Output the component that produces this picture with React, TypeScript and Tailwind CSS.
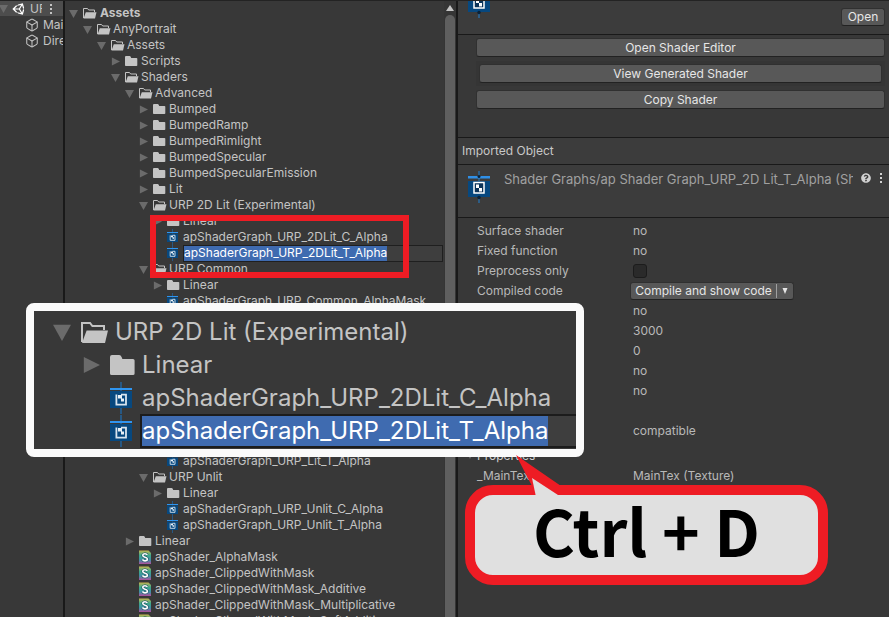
import { Box } from "lucide-react";
import { FaUnity, FaQuestionCircle } from "react-icons/fa";

type Kind = "open" | "folder" | "graph" | "shader";
type Item = { name: string; level: number; kind: Kind; bold?: boolean; editing?: boolean };

const topItems: Item[] = [
  { name: "Assets", level: 0, kind: "open", bold: true },
  { name: "AnyPortrait", level: 1, kind: "open" },
  { name: "Assets", level: 2, kind: "open" },
  { name: "Scripts", level: 3, kind: "folder" },
  { name: "Shaders", level: 3, kind: "open" },
  { name: "Advanced", level: 4, kind: "open" },
  { name: "Bumped", level: 5, kind: "folder" },
  { name: "BumpedRamp", level: 5, kind: "folder" },
  { name: "BumpedRimlight", level: 5, kind: "folder" },
  { name: "BumpedSpecular", level: 5, kind: "folder" },
  { name: "BumpedSpecularEmission", level: 5, kind: "folder" },
  { name: "Lit", level: 5, kind: "folder" },
  { name: "URP 2D Lit (Experimental)", level: 5, kind: "open" },
  { name: "Linear", level: 6, kind: "folder" },
  { name: "apShaderGraph_URP_2DLit_C_Alpha", level: 6, kind: "graph" },
  { name: "apShaderGraph_URP_2DLit_T_Alpha", level: 6, kind: "graph", editing: true },
  { name: "URP Common", level: 5, kind: "open" },
  { name: "Linear", level: 6, kind: "folder" },
  { name: "apShaderGraph_URP_Common_AlphaMask", level: 6, kind: "graph" },
];

const bottomItems: Item[] = [
  { name: "apShaderGraph_URP_Lit_T_Alpha", level: 6, kind: "graph" },
  { name: "URP Unlit", level: 5, kind: "open" },
  { name: "Linear", level: 6, kind: "folder" },
  { name: "apShaderGraph_URP_Unlit_C_Alpha", level: 6, kind: "graph" },
  { name: "apShaderGraph_URP_Unlit_T_Alpha", level: 6, kind: "graph" },
  { name: "Linear", level: 4, kind: "folder" },
  { name: "apShader_AlphaMask", level: 4, kind: "shader" },
  { name: "apShader_ClippedWithMask", level: 4, kind: "shader" },
  { name: "apShader_ClippedWithMask_Additive", level: 4, kind: "shader" },
  { name: "apShader_ClippedWithMask_Multiplicative", level: 4, kind: "shader" },
  { name: "apShader_ClippedWithMask_SoftAdditive", level: 4, kind: "shader" },
];

const indents = ["pl-1", "pl-[18px]", "pl-8", "pl-[46px]", "pl-[60px]", "pl-[74px]", "pl-[88px]"];

function Arrow({ kind, className }: { kind: Kind; className: string }) {
  return (
    <svg viewBox="0 0 10 10" className={`shrink-0 ${className}`} fill="#6b6b6b">
      {kind === "open" && <path d="M0 1h10L5 10z" />}
      {kind === "folder" && <path d="M1 0.5v9L10 5z" />}
    </svg>
  );
}

function KindIcon({ kind, className }: { kind: Kind; className: string }) {
  return (
    <svg viewBox="0 0 14 16" className={`shrink-0 ${className}`}>
      {kind === "open" && (
        <>
          <path d="M0.5 13V3.5h4l1.2 1.5h5.8v2" fill="none" stroke="#c4c4c4" />
          <path d="M0.500 13.5l2.300-6.300H13.500l-1.500 6.300z" fill="#c4c4c4" />
        </>
      )}
      {kind === "folder" && (
        <path d="M0 4q0-1 1-1h3.6q.8 0 1.2 1l.4 1H11.500q.8 0 .8.8v6.400q0 .8-.8.8H.8q-.8 0-.8-.8z" fill="#c4c4c4" />
      )}
      {kind === "graph" && (
        <>
          <path d="M5.500 0v16" stroke="#1d6fb8" strokeWidth="0.6" />
          <rect x="0" y="4.500" width="11" height="8.500" fill="#07487f" />
          <rect x="0" y="3" width="11" height="1" fill="#2f95f0" />
          <path d="M3.200 6.300v5h4.800v-5h-2.500" fill="none" stroke="#d8e4ee" strokeWidth="0.9" />
          <path d="M4 6.500h2v1.800H4zM5.500 8.300h1.500v1.500H5.500z" fill="#e8f0f6" />
        </>
      )}
      {kind === "shader" && (
        <>
          <defs>
            <linearGradient id="shaderPage" x1="0" y1="0" x2="0" y2="1">
              <stop offset="0" stopColor="#c5b44e" />
              <stop offset="0.350" stopColor="#3fa98a" />
              <stop offset="0.700" stopColor="#3e8fa6" />
              <stop offset="1" stopColor="#b04f9c" />
            </linearGradient>
          </defs>
          <path d="M0 1.500h9.500l2.500 2.500v11H0z" fill="url(#shaderPage)" />
          <path d="M8.300 5.900C7.800 5 7 4.700 6 4.700c-1.300 0-2.200.7-2.200 1.700 0 2.400 4.600 1.200 4.600 3.700 0 1.100-1 1.800-2.400 1.800-1.200 0-2.100-.5-2.500-1.500" fill="none" stroke="#12485a" strokeWidth="2.600" />
          <path d="M8.300 5.900C7.800 5 7 4.700 6 4.700c-1.300 0-2.200.7-2.200 1.700 0 2.400 4.600 1.200 4.600 3.700 0 1.100-1 1.800-2.400 1.800-1.200 0-2.100-.5-2.500-1.500" fill="none" stroke="#fff" strokeWidth="1.600" />
        </>
      )}
    </svg>
  );
}

function TreeRow({ item }: { item: Item }) {
  return (
    <li className={`flex h-4 items-center ${indents[item.level]}`}>
      <Arrow kind={item.kind} className="mr-[5px] size-[9px]" />
      <KindIcon kind={item.kind} className="mr-0.5 h-4 w-3.5" />
      {item.editing ? (
        <div className="mr-px flex h-[17px] grow items-center border border-[#1f1f1f] bg-[#3e3e3e]">
          <input
            aria-label="Asset name"
            defaultValue={item.name}
            className="field-sizing-content h-[15px] bg-[#3f6bb0] text-white outline-none"
          />
        </div>
      ) : (
        <span className={`whitespace-nowrap ${item.bold ? "pl-px font-bold" : ""}`}>{item.name}</span>
      )}
    </li>
  );
}

function GraphLogo() {
  return (
    <svg viewBox="0 0 22 32" className="h-8 w-[22px] shrink-0">
      <path d="M11 0v32" stroke="#1f7fd0" />
      <rect y="5" width="22" height="2.500" fill="#2f8fe6" />
      <rect y="10" width="22" height="16" fill="#07487f" />
      <circle cx="11" cy="5.500" r="1.500" fill="#0a2238" />
      <circle cx="11" cy="26.500" r="1.700" fill="#0a2238" />
      <rect x="6" y="11.500" width="10" height="10.500" fill="#0b3358" stroke="#fff" strokeWidth="1.500" />
      <path d="M8 13.500h3V17H8zM11 17h3v3.500h-3z" fill="#fff" />
    </svg>
  );
}

const buttonLook =
  "rounded-[3px] border border-[#303030] border-b-[#222] bg-[#585858] text-center text-[#e6e6e6] leading-4";

function Value({ label, value }: { label: string; value: string }) {
  return (
    <div className="flex h-5 items-center">
      <dt className="w-39 shrink-0">{label}</dt>
      <dd>{value}</dd>
    </div>
  );
}

function Inspector() {
  return (
    <section className="flex min-w-0 grow flex-col bg-[#383838] text-[#b8b8b8]">
      <header className="flex h-[34px] shrink-0 items-end justify-between overflow-hidden border-b border-[#191919] bg-[#3c3c3c] pr-1 pl-[10px]">
        <div className="mb-4">
          <GraphLogo />
        </div>
        <button className={`mb-2 h-[18px] w-11 ${buttonLook}`}>Open</button>
      </header>
      <div className="flex h-[103px] shrink-0 flex-col border-b border-[#191919] pt-[3px] pr-1 pl-[18px]">
        <button className={`h-[19px] ${buttonLook}`}>Open Shader Editor</button>
        <div className="my-1 flex bg-[#353535] px-[3px] py-[3px]">
          <button className={`h-[19px] grow ${buttonLook}`}>View Generated Shader</button>
        </div>
        <button className={`h-[19px] ${buttonLook}`}>Copy Shader</button>
      </div>
      <h2 className="flex h-[27px] shrink-0 items-center border-b border-[#191919] bg-[#3c3c3c] pl-1 text-[#c8c8c8]">
        Imported Object
      </h2>
      <header className="flex h-[53px] shrink-0 items-start border-b border-[#191919] bg-[#3c3c3c] pt-1.5 pr-1.5 pl-[10px]">
        <GraphLogo />
        <h3 className="ml-[14px] min-w-0 grow overflow-hidden text-[13px] leading-4 whitespace-nowrap text-[#a0a0a0]">
          Shader Graphs/ap Shader Graph_URP_2D Lit_T_Alpha (Shader)
        </h3>
        <button aria-label="Help" className="ml-2 pt-0.5">
          <FaQuestionCircle className="size-2.5 text-[#d0d0d0]" />
        </button>
        <button aria-label="More" className="ml-2 pt-0.5">
          <svg viewBox="0 0 4 10" className="h-2.5 w-1" fill="#d0d0d0">
            <path d="M1 0h2v2H1zM1 4h2v2H1zM1 8h2v2H1z" />
          </svg>
        </button>
      </header>
      <dl className="flex flex-col pt-[3px] pl-[19px]">
        <Value label="Surface shader" value="no" />
        <Value label="Fixed function" value="no" />
        <div className="flex h-5 items-center">
          <dt className="w-39 shrink-0">
            <label htmlFor="preprocess">Preprocess only</label>
          </dt>
          <dd className="flex">
            <input
              id="preprocess"
              type="checkbox"
              className="size-3.5 appearance-none rounded-[3px] border border-[#1c1c1c] bg-[#2a2a2a]"
            />
          </dd>
        </div>
        <div className="flex h-5 items-center">
          <dt className="w-[153px] shrink-0">Compiled code</dt>
          <dd className={`flex h-[18px] w-[164px] items-center ${buttonLook}`}>
            <button className="grow whitespace-nowrap">Compile and show code</button>
            <button aria-label="Compile options" className="flex h-3.5 w-[17px] items-center justify-center border-l border-[#a0a0a0]">
              <svg viewBox="0 0 6 6" className="size-1.5" fill="#e6e6e6">
                <path d="M0.500 0h5L3 6z" />
              </svg>
            </button>
          </dd>
        </div>
        <Value label="" value="no" />
        <Value label="" value="3000" />
        <Value label="" value="0" />
        <Value label="" value="no" />
        <Value label="" value="no" />
        <Value label="" value="" />
        <Value label="" value="compatible" />
      </dl>
      <h4 className="flex h-[25px] items-center pt-[5px] pl-[9px] text-[#d0d0d0]">
        <svg viewBox="0 0 6 6" className="mr-1 size-1.5" fill="#6b6b6b">
          <path d="M0 1h6L3 6z" />
        </svg>
        Properties
      </h4>
      <dl className="pl-[19px]">
        <Value label="_MainTex" value="MainTex (Texture)" />
      </dl>
    </section>
  );
}

function Magnifier() {
  return (
    <div className="absolute top-[302px] left-[26px] w-[558px] rounded-lg border-8 border-[#fafafa] bg-[#383838] text-2xl leading-[33px] whitespace-nowrap text-[#c4c4c4]">
      <ul className="h-[138px] overflow-hidden pt-1">
        <li className="flex h-[33px] items-center pl-[19px]">
          <Arrow kind="open" className="mr-2.5 size-[18px]" />
          <KindIcon kind="open" className="mr-1.5 h-8 w-7" />
          URP 2D Lit (Experimental)
        </li>
        <li className="flex h-[33px] items-center pl-12">
          <Arrow kind="folder" className="mr-2.5 size-[18px]" />
          <KindIcon kind="folder" className="mr-1 h-8 w-7" />
          Linear
        </li>
        <li className="flex h-[33px] items-center pl-[76px]">
          <KindIcon kind="graph" className="mr-1 h-8 w-7" />
          apShaderGraph_URP_2DLit_C_Alpha
        </li>
        <li className="flex h-[33px] items-center pl-[76px]">
          <KindIcon kind="graph" className="mr-0.5 h-8 w-7" />
          <div className="flex grow border-y-2 border-l-2 border-[#1c1c1c] bg-[#3e3e3e]">
            <input
              aria-label="Asset name, enlarged"
              defaultValue="apShaderGraph_URP_2DLit_T_Alpha"
              className="field-sizing-content h-[30px] bg-[#3f6bb0] text-white outline-none"
            />
          </div>
        </li>
      </ul>
    </div>
  );
}

function Callout() {
  return (
    <div className="absolute top-[484px] left-[465px]">
      <p className="flex h-[100px] w-[363px] items-center justify-center rounded-[28px] border-10 border-[#ee1c24] bg-[#e0e0e0] pb-3 font-['Noto_Sans_CJK_KR','Noto_Sans',sans-serif] text-[64px] leading-none font-bold text-black">
        Ctrl + D
      </p>
      <svg viewBox="0 0 60 42" className="absolute -top-[30px] left-[45px] h-[42px] w-[60px]">
        <path d="M6 0L51 31V40H23L22 31z" fill="#ee1c24" />
        <path d="M22 23L26 42H49L48 40z" fill="#e0e0e0" />
      </svg>
    </div>
  );
}

export default function App() {
  return (
    <main className="relative flex h-screen overflow-hidden border-t border-[#232323] bg-[#383838] font-['Inter',sans-serif] text-xs leading-4 text-[#c4c4c4]">
      <aside className="flex w-[63px] shrink-0 flex-col overflow-hidden">
        <div className="flex h-[15px] shrink-0 items-center bg-[#4d4d4d]">
          <Arrow kind="open" className="-ml-px mr-1 size-[9px]" />
          <FaUnity className="size-3.5 shrink-0 text-white" />
          <span className="ml-1 w-3 overflow-hidden">URP</span>
          <svg viewBox="0 0 2 10" className="ml-2 h-2.5 w-0.5" fill="#c4c4c4">
            <path d="M0 0h2v2H0zM0 4h2v2H0zM0 8h2v2H0z" />
          </svg>
        </div>
        <ul className="pt-px">
          {["Main Camera", "Directional Light"].map((name) => (
            <li key={name} className="flex h-4 items-center overflow-hidden pl-[25px] whitespace-nowrap">
              <Box className="mr-1 size-3.5 shrink-0" strokeWidth={1.8} />
              {name}
            </li>
          ))}
        </ul>
      </aside>

      <section className="flex min-w-0 shrink-0 basis-[395px] border-x-2 border-[#191919]">
        <ul className="min-w-0 grow overflow-hidden pt-1">
          {topItems.map((item, i) => (
            <TreeRow key={i} item={item} />
          ))}
          <li className="h-36" aria-hidden="true" />
          {bottomItems.map((item, i) => (
            <TreeRow key={i} item={item} />
          ))}
        </ul>
        <div className="flex w-3 shrink-0 flex-col items-center bg-[#353535]">
          <svg viewBox="0 0 8 6" className="my-1 h-1.5 w-2" fill="#c4c4c4">
            <path d="M4 0l4 6H0z" />
          </svg>
          <div className="w-2.5 grow rounded-t-md bg-[#5f5f5f]" />
        </div>
      </section>

      <Inspector />

      <div className="absolute top-[214px] left-[150px] h-[63px] w-[259px] border-6 border-[#ee1c24]" />
      <Magnifier />
      <Callout />
    </main>
  );
}
